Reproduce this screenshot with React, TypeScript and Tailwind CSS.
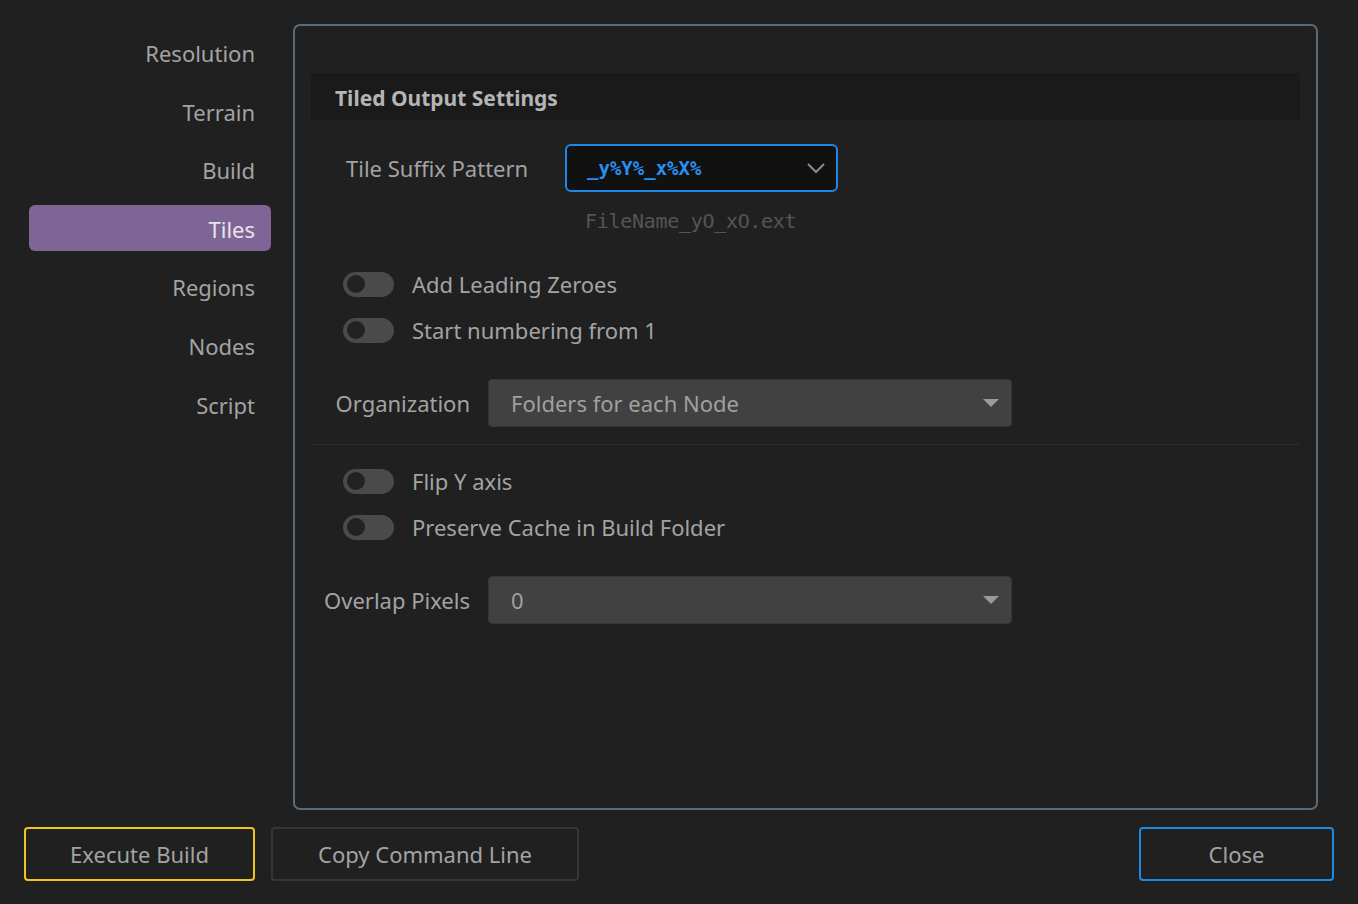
import React from "react";

const font = { fontFamily: '"Noto Sans", "Open Sans", sans-serif' };
const mono = { fontFamily: '"DejaVu Sans Mono", "Liberation Mono", monospace' };

const navItems = ["Resolution", "Terrain", "Build", "Tiles", "Regions", "Nodes", "Script"];

function Toggle({ label }: { label: string }) {
  return (
    <div className="flex items-center h-[26px]">
      <div className="w-[51px] h-[25px] rounded-full bg-[#4a4a4a] flex items-center pl-[4px]">
        <div className="w-[18px] h-[18px] rounded-full bg-[#222222]" />
      </div>
      <span className="ml-[18px] text-[22px] text-[#a3a3a3] leading-none">{label}</span>
    </div>
  );
}

function Dropdown({ label, value }: { label: string; value: string }) {
  return (
    <div className="flex items-center">
      <div className="w-[177px] text-right text-[22px] text-[#a3a3a3] leading-none pr-[18px]">{label}</div>
      <div className="w-[524px] h-[48px] rounded-[4px] bg-[#414141] border border-[#363636] flex items-center justify-between pl-[22px] pr-[12px]">
        <span className="text-[22px] text-[#a0a0a0] leading-none">{value}</span>
        <svg width="16" height="9" viewBox="0 0 16 9">
          <path d="M0 0 H16 L8 8 Z" fill="#9a9a9a" />
        </svg>
      </div>
    </div>
  );
}

function Button({ label, border, width }: { label: string; border: string; width: string }) {
  return (
    <button className={`${width} h-[54px] rounded-[4px] border-2 ${border} text-[22px] text-[#a3a3a3] flex items-center justify-center`}>
      {label}
    </button>
  );
}

export default function App() {
  return (
    <div className="w-[1358px] h-[904px] bg-[#202020] flex flex-col overflow-hidden" style={font}>
      <div className="flex flex-1 pl-[29px] pt-[24px] pr-[40px]">
        <nav className="w-[242px] flex flex-col gap-[12.6px] pt-[5px]">
          {navItems.map((item) => (
            <div
              key={item}
              className={`h-[46px] rounded-[6px] flex items-center justify-end pr-[16px] text-[22px] leading-none ${
                item === "Tiles" ? "bg-[#7f6496] text-[#e6e6e6]" : "text-[#a3a3a3]"
              }`}
            >
              <span className="pt-[2px]">{item}</span>
            </div>
          ))}
        </nav>

        <section className="ml-[22px] flex-1 h-[786px] rounded-[7px] border-2 border-[#5b6a79] px-[16px] pt-[47px]">
          <div className="h-[47px] bg-[#1a1a1a] flex items-center pl-[24px] pt-[3px]">
            <h2 className="text-[21px] font-bold text-[#b5b5b5] leading-none">Tiled Output Settings</h2>
          </div>

          <div className="flex items-center mt-[24px] pl-[35px]">
            <span className="w-[219px] text-[22px] text-[#a3a3a3] leading-none">Tile Suffix Pattern</span>
            <div className="w-[273px] h-[48px] rounded-[6px] border-2 border-[#1e88e5] bg-[#111111] flex items-center justify-between pl-[20px] pr-[10px]">
              <span className="text-[19px] font-bold text-[#2a8ff0] leading-none" style={{ ...mono, letterSpacing: "0px" }}>
                _y%Y%_x%X%
              </span>
              <svg width="20" height="12" viewBox="0 0 20 12">
                <path d="M2 2 L10 10 L18 2" fill="none" stroke="#8a8a8a" strokeWidth="2" />
              </svg>
            </div>
          </div>
          <div className="pl-[274px] mt-[19px] text-[20px] text-[#555555] leading-none" style={{ ...mono, letterSpacing: "-0.3px" }}>
            FileName_yO_xO.ext
          </div>

          <div className="pl-[32px] mt-[40px] flex flex-col gap-[20px]">
            <Toggle label="Add Leading Zeroes" />
            <Toggle label="Start numbering from 1" />
          </div>

          <div className="mt-[36px]">
            <Dropdown label="Organization" value="Folders for each Node" />
          </div>

          <div className="h-[1px] bg-[#2c2c2c] mt-[17px] ml-[2px]" />

          <div className="pl-[32px] mt-[23px] flex flex-col gap-[20px]">
            <Toggle label="Flip Y axis" />
            <Toggle label="Preserve Cache in Build Folder" />
          </div>

          <div className="mt-[36px]">
            <Dropdown label="Overlap Pixels" value="0" />
          </div>
        </section>
      </div>

      <div className="flex items-center pl-[24px] pr-[24px] pb-[24px] pt-[17px]">
        <Button label="Execute Build" border="border-[#f2c31a]" width="w-[231px]" />
        <div className="ml-[16px]">
          <Button label="Copy Command Line" border="border-[#353535]" width="w-[308px]" />
        </div>
        <div className="ml-auto">
          <Button label="Close" border="border-[#1e88e5]" width="w-[195px]" />
        </div>
      </div>
    </div>
  );
}
